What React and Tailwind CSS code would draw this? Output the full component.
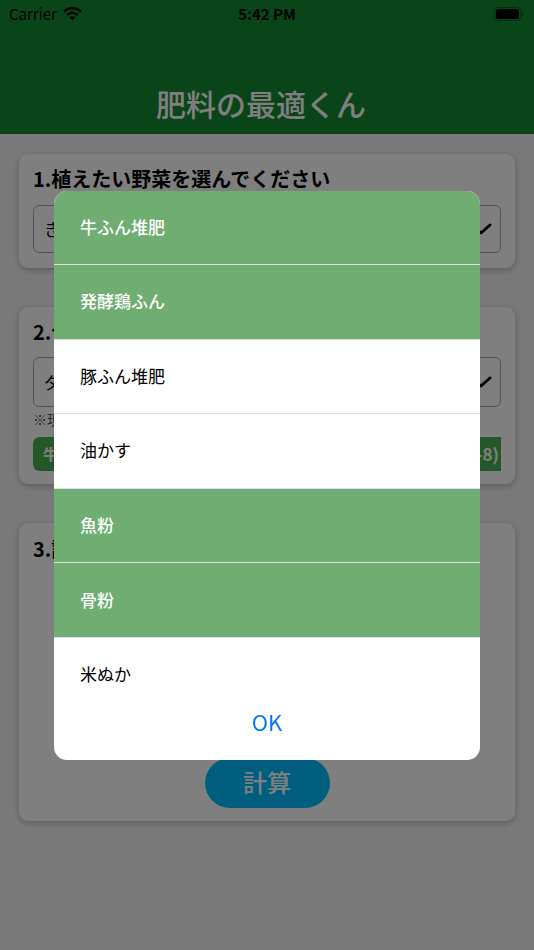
import React from "react";

const FONT = {
  fontFamily:
    '"Noto Sans CJK JP", "Noto Sans", "Liberation Sans", sans-serif',
};

const fertilizers = [
  { label: "牛ふん堆肥", selected: true },
  { label: "発酵鶏ふん", selected: true },
  { label: "豚ふん堆肥", selected: false },
  { label: "油かす", selected: false },
  { label: "魚粉", selected: true },
  { label: "骨粉", selected: true },
  { label: "米ぬか", selected: false },
];

function Wifi() {
  return (
    <svg width="19" height="14" viewBox="0 0 19 14" fill="#000">
      <path d="M9.5 0C5.9 0 2.7 1.4 0.3 3.7l1.6 1.7C3.9 3.5 6.6 2.3 9.5 2.3s5.6 1.2 7.6 3.1l1.6-1.7C16.3 1.4 13.1 0 9.5 0z" />
      <path d="M9.5 4.6c-2.3 0-4.4 0.9-6 2.4l1.6 1.7c1.2-1.1 2.7-1.8 4.4-1.8s3.2 0.7 4.4 1.8l1.6-1.7c-1.6-1.5-3.7-2.4-6-2.4z" />
      <path d="M9.5 9.2c-1.1 0-2.1 0.4-2.9 1.1L9.5 13.4l2.9-3.1c-0.8-0.7-1.8-1.1-2.9-1.1z" />
    </svg>
  );
}

function Battery() {
  return (
    <svg width="30" height="14" viewBox="0 0 30 14">
      <rect x="0.5" y="0.5" width="26" height="13" rx="3.5" fill="none" stroke="#000" strokeOpacity="0.35" />
      <rect x="2" y="2" width="23" height="10" rx="2" fill="#000" />
      <path d="M28 4.5v5c0.8-0.3 1.5-1.3 1.5-2.5s-0.7-2.2-1.5-2.5z" fill="#000" fillOpacity="0.4" />
    </svg>
  );
}

function Chevron() {
  return (
    <svg width="22" height="12" viewBox="0 0 22 12" fill="none">
      <path d="M2 2l9 8 9-8" stroke="#000" strokeWidth="3" strokeLinecap="round" strokeLinejoin="round" />
    </svg>
  );
}

function SelectBox({ value, h }) {
  return (
    <div
      className={`flex items-center justify-between rounded-[6px] border border-[#a9a9a9] bg-white pl-[10px] pr-[8px] ${h}`}
    >
      <span className="text-[17px] text-black">{value}</span>
      <Chevron />
    </div>
  );
}

export default function App() {
  return (
    <div className="relative min-h-[950px] bg-[#f3f3f3]" style={FONT}>
      {/* header */}
      <div className="flex h-[134px] flex-col bg-[#148a32]">
        <div className="relative flex h-[28px] items-center px-[9px]">
          <div className="flex items-center gap-[6px]">
            <span className="text-[15px] text-black">Carrier</span>
            <Wifi />
          </div>
          <span className="absolute left-1/2 -translate-x-1/2 text-[15px] font-semibold text-black">
            5:42 PM
          </span>
          <div className="ml-auto mr-[1px] flex items-center">
            <Battery />
          </div>
        </div>
        <div className="flex flex-1 items-end justify-center pb-[11px] pr-[12px]">
          <h1 className="text-[30px] font-medium leading-[40px] text-white">
            肥料の最適くん
          </h1>
        </div>
      </div>

      {/* cards */}
      <div className="flex flex-col gap-[39px] px-[19px] pt-[20px]">
        <div className="flex flex-col rounded-[9px] bg-white px-[14px] pb-[15px] pt-[12px] shadow-[0_2px_6px_rgba(0,0,0,0.25)]">
          <p className="text-[20px] font-bold leading-[26px] text-black">
            1.植えたい野菜を選んでください
          </p>
          <div className="mt-[13px]">
            <SelectBox value="きゅうり" h="h-[48px]" />
          </div>
        </div>

        <div className="flex flex-col rounded-[9px] bg-white px-[14px] pb-[13px] pt-[12px] shadow-[0_2px_6px_rgba(0,0,0,0.25)]">
          <p className="text-[20px] font-bold leading-[26px] text-black">
            2.今ある肥料を選んでください
          </p>
          <div className="mt-[12px]">
            <SelectBox value="ダブルタップで追加" h="h-[50px]" />
          </div>
          <p className="mt-[2px] text-[14px] leading-[20px] text-[#555]">
            ※現在選択中の肥料
          </p>
          <div className="mt-[8px] flex h-[34px] gap-[6px] overflow-hidden rounded-l-[6px]">
            <div className="flex shrink-0 items-center rounded-[6px] bg-[#4caf50] px-[10px] text-[15px] font-semibold text-white">
              牛ふん堆肥(2-2-1)
            </div>
            <div className="flex shrink-0 items-center rounded-[6px] bg-[#4caf50] px-[10px] text-[15px] font-semibold text-white">
              発酵鶏ふん(3-6-3)
            </div>
            <div className="flex flex-1 items-center justify-end bg-[#4caf50] pr-[2px] text-[17px] font-semibold text-white">
              (4-9-8)
            </div>
          </div>
        </div>

        <div className="flex h-[298px] flex-col rounded-[9px] bg-white px-[14px] pb-[13px] pt-[13px] shadow-[0_2px_6px_rgba(0,0,0,0.25)]">
          <p className="text-[20px] font-bold leading-[26px] text-black">
            3.計算結果
          </p>
          <div className="flex-1" />
          <div className="flex justify-center">
            <button className="flex h-[50px] w-[125px] items-center justify-center rounded-full bg-[#00bfff] pb-[3px] text-[24px] font-medium text-white">
              計算
            </button>
          </div>
        </div>
      </div>

      {/* dimmed backdrop and picker dialog */}
      <div className="fixed inset-0 flex items-center justify-center bg-black/50">
        <div className="flex h-[569px] w-[426px] flex-col overflow-hidden rounded-[13px] bg-white">
          <div className="h-[500px] overflow-hidden">
            {fertilizers.map((f) => (
              <div
                key={f.label}
                className={`flex h-[74.6px] items-center border-b border-[#dedede] pb-[2px] pl-[26px] text-[17px] ${
                  f.selected
                    ? "bg-[#6fad72] font-medium text-white"
                    : "bg-white text-black"
                }`}
              >
                {f.label}
              </div>
            ))}
          </div>
          <div className="flex flex-1 items-center justify-center pb-[8px]">
            <span className="text-[22px] text-[#007aff]">OK</span>
          </div>
        </div>
      </div>
    </div>
  );
}
